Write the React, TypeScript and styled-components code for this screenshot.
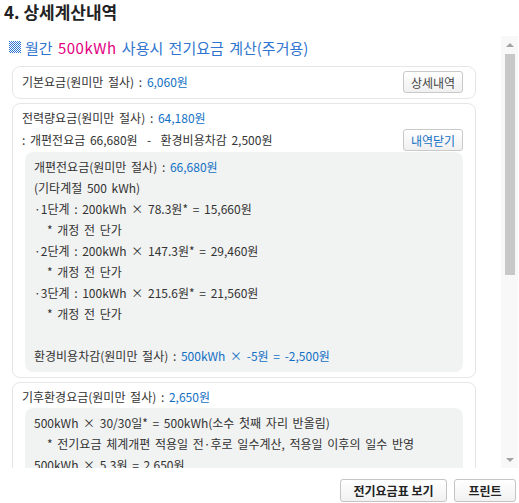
import React from "react";
import styled, { createGlobalStyle } from "styled-components";

const GlobalStyle = createGlobalStyle`
  html, body {
    margin: 0;
    padding: 0;
    background: #fff;
  }
  body {
    font-family: "Noto Sans CJK KR", "Noto Sans", sans-serif;
    color: #333;
  }
`;

type Step = { label: string; kwh: string; price: string; total: string };

const steps: Step[] = [
  { label: "1단계", kwh: "200kWh", price: "78.3원*", total: "15,660원" },
  { label: "2단계", kwh: "200kWh", price: "147.3원*", total: "29,460원" },
  { label: "3단계", kwh: "100kWh", price: "215.6원*", total: "21,560원" },
];

const CheckIcon = () => (
  <svg width="12" height="12" viewBox="0 0 12 12">
    <defs>
      <pattern id="chk" width="2" height="2" patternUnits="userSpaceOnUse">
        <rect width="1" height="1" fill="#2f74cf" />
        <rect x="1" y="1" width="1" height="1" fill="#2f74cf" />
      </pattern>
    </defs>
    <rect width="12" height="12" fill="url(#chk)" />
  </svg>
);

const App = () => {
  return (
    <>
      <GlobalStyle />
      <Page>
        <Title>4. 상세계산내역</Title>
        <ScrollFrame>
          <ScrollContent>
            <SubTitle>
              <CheckIcon />
              <span>
                월간 <Em>500kWh</Em> 사용시 전기요금 계산(주거용)
              </span>
            </SubTitle>
            <Cards>
              <Card>
                <Row>
                  <Text>
                    기본요금(원미만 절사) : <Value>6,060원</Value>
                  </Text>
                  <SmallButton>상세내역</SmallButton>
                </Row>
              </Card>

              <Card>
                <Line>
                  전력량요금(원미만 절사) : <Value>64,180원</Value>
                </Line>
                <Row $gap>
                  <Text>: 개편전요금 66,680원&nbsp; - &nbsp;환경비용차감 2,500원</Text>
                  <SmallButton $blue>내역닫기</SmallButton>
                </Row>
                <Detail>
                  <DetailLine>
                    개편전요금(원미만 절사) : <Value>66,680원</Value>
                  </DetailLine>
                  <DetailLine>(기타계절 500 kWh)</DetailLine>
                  {steps.map((s) => (
                    <React.Fragment key={s.label}>
                      <DetailLine>
                        ·{s.label} : {s.kwh} × {s.price} = {s.total}
                      </DetailLine>
                      <DetailLine $indent>* 개정 전 단가</DetailLine>
                    </React.Fragment>
                  ))}
                  <DetailLine />
                  <DetailLine>
                    환경비용차감(원미만 절사) : <Value>500kWh × -5원 = -2,500원</Value>
                  </DetailLine>
                </Detail>
              </Card>

              <Card>
                <Line>
                  기후환경요금(원미만 절사) : <Value>2,650원</Value>
                </Line>
                <Detail>
                  <DetailLine>500kWh × 30/30일* = 500kWh(소수 첫째 자리 반올림)</DetailLine>
                  <DetailLine $indent>
                    * 전기요금 체계개편 적용일 전·후로 일수계산, 적용일 이후의 일수 반영
                  </DetailLine>
                  <DetailLine>500kWh × 5.3원 = 2,650원</DetailLine>
                </Detail>
              </Card>
            </Cards>
          </ScrollContent>
          <ScrollBar>
            <ArrowButton>
              <Arrow $dir="up" />
            </ArrowButton>
            <Track>
              <Thumb />
            </Track>
            <ArrowButton>
              <Arrow $dir="down" />
            </ArrowButton>
          </ScrollBar>
        </ScrollFrame>
        <Footer>
          <FooterButton $width={107}>전기요금표 보기</FooterButton>
          <FooterButton $width={62}>프린트</FooterButton>
        </Footer>
      </Page>
    </>
  );
};

export default App;

// Styles

const Page = styled.div`
  width: 519px;
  height: 503px;
  overflow: hidden;
`;

const Title = styled.h2`
  margin: 0;
  height: 36px;
  padding-left: 4px;
  font-size: 17px;
  line-height: 24px;
  font-weight: 700;
  color: #222;
`;

const ScrollFrame = styled.div`
  display: flex;
  height: 432px;
`;

const ScrollContent = styled.div`
  flex: 1;
  overflow: hidden;
  padding: 1px 25px 0 12px;
`;

const SubTitle = styled.div`
  display: flex;
  align-items: center;
  gap: 4px;
  margin: 0 0 9px -3px;
  height: 20px;
  font-size: 15px;
  word-spacing: 2px;
  color: #2f74cf;
`;

const Em = styled.span`
  color: #e4007f;
  letter-spacing: 0.5px;
`;

const Cards = styled.div`
  display: flex;
  flex-direction: column;
  gap: 4px;
`;

const Card = styled.div`
  border: 1px solid #e6e6e6;
  border-radius: 8px;
  padding: 4px 12px 5px 9px;
  font-size: 12px;
  word-spacing: 2px;
`;

const Row = styled.div<{ $gap?: boolean }>`
  display: flex;
  align-items: center;
  justify-content: space-between;
  height: 22px;
  margin-top: ${(p) => (p.$gap ? "1px" : "0")};
`;

const Text = styled.span`
  line-height: 20px;
  color: #333;
`;

const Line = styled.div`
  line-height: 20px;
  height: 20px;
  color: #333;
`;

const Value = styled.span`
  color: #1270c4;
`;

const SmallButton = styled.button<{ $blue?: boolean }>`
  width: 60px;
  height: 22px;
  padding: 0;
  border: 1px solid #c9c9c9;
  border-radius: 3px;
  background: linear-gradient(#ffffff, #f0f0f0);
  font-family: inherit;
  font-size: 12px;
  color: ${(p) => (p.$blue ? "#1270c4" : "#444")};
`;

const Detail = styled.div`
  margin: 1px 0 0 3px;
  padding: 4px 9px 6px;
  background: #f1f2f2;
  border-radius: 8px;
`;

const DetailLine = styled.div<{ $indent?: boolean }>`
  height: 21px;
  line-height: 21px;
  padding-left: ${(p) => (p.$indent ? "13px" : "0")};
  white-space: nowrap;
  color: #333;
`;

const ScrollBar = styled.div`
  width: 17px;
  margin-right: 1px;
  display: flex;
  flex-direction: column;
  background: #f8f8f8;
`;

const ArrowButton = styled.div`
  height: 17px;
  display: flex;
  align-items: center;
  justify-content: center;
`;

const Arrow = styled.div<{ $dir: "up" | "down" }>`
  width: 0;
  height: 0;
  border-left: 4px solid transparent;
  border-right: 4px solid transparent;
  ${(p) =>
    p.$dir === "up"
      ? "border-bottom: 4px solid #a3a3a3;"
      : "border-top: 4px solid #a3a3a3;"}
`;

const Track = styled.div`
  flex: 1;
  display: flex;
  justify-content: center;
  padding-top: 1px;
`;

const Thumb = styled.div`
  width: 10px;
  height: 221px;
  background: #c8c8c8;
`;

const Footer = styled.div`
  display: flex;
  justify-content: flex-end;
  gap: 7px;
  padding: 11px 3px 0 0;
`;

const FooterButton = styled.button<{ $width: number }>`
  width: ${(p) => p.$width}px;
  height: 23px;
  padding: 0;
  border: 1px solid #c4c4c4;
  border-radius: 3px;
  background: linear-gradient(#ffffff, #f1f1f1);
  font-family: inherit;
  font-size: 12px;
  font-weight: 700;
  color: #222;
`;
